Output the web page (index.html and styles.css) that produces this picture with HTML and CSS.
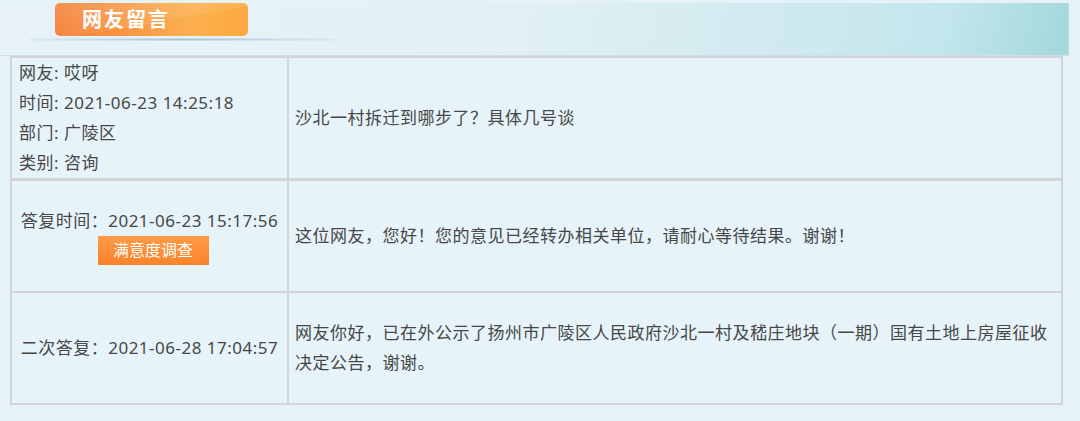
FILE: index.html
```html
<!DOCTYPE html>
<html lang="zh-CN">
<head>
    <meta charset="UTF-8">
    <meta name="viewport" content="width=device-width, initial-scale=1.0">
    <title>网友留言</title>
    <link rel="stylesheet" href="styles.css">
</head>
<body>
    <div class="head">
        <div class="tab">网友留言</div>
        <div class="tab-line"></div>
    </div>
    <table class="msg">
        <tr class="ask">
            <td class="info">
                网友: 哎呀<br>
                时间: 2021-06-23 14:25:18<br>
                部门: 广陵区<br>
                类别: 咨询
            </td>
            <td class="text">沙北一村拆迁到哪步了？具体几号谈</td>
        </tr>
        <tr class="reply first">
            <td class="info center">
                答复时间：2021-06-23 15:17:56
                <div><span class="survey">满意度调查</span></div>
            </td>
            <td class="text">这位网友，您好！您的意见已经转办相关单位，请耐心等待结果。谢谢！</td>
        </tr>
        <tr class="reply">
            <td class="info center">二次答复：2021-06-28 17:04:57</td>
            <td class="text">网友你好，已在外公示了扬州市广陵区人民政府沙北一村及嵇庄地块（一期）国有土地上房屋征收决定公告，谢谢。</td>
        </tr>
    </table>
</body>
</html>
```

FILE: styles.css
```css
body {
    margin: 0;
    background: #e5f2f7;
    font-family: "Noto Sans", "Noto Sans CJK SC", sans-serif;
    color: #474747;
    font-size: 17px;
    letter-spacing: 0.5px;
}
.head {
    height: 52px;
    margin: 3px 11px 0 0;
    background: linear-gradient(100deg, #e6f2f7 0%, #e3f1f6 45%, #d2ebf0 70%, #c2e6ec 88%, #a3d8dc 100%);
    border-right: 1px solid #c5d6d9;
    border-bottom: 1px solid #d0dfe2;
}
.tab {
    width: 193px;
    height: 33px;
    margin: 2px 0 0 55px;
    box-sizing: border-box;
    padding-left: 27px;
    border-radius: 5px;
    background: linear-gradient(170deg, rgba(255,255,255,0.18) 0%, rgba(255,255,255,0.08) 55%, rgba(255,255,255,0) 56%),
                linear-gradient(90deg, #f47a2e 0%, #f99541 35%, #fbb04f 70%, #fca93e 100%);
    color: #fff;
    font-weight: bold;
    font-size: 20px;
    line-height: 33px;
    letter-spacing: 2px;
}
.tab-line {
    width: 305px;
    height: 3px;
    margin: 2px 0 0 30px;
    background: radial-gradient(ellipse at center, rgba(110,150,190,0.55) 0%, rgba(150,180,205,0.25) 55%, rgba(229,242,247,0) 100%);
}
.msg {
    margin: 0 0 0 10px;
    width: 1053px;
    border-collapse: collapse;
    background: #e6f3f8;
    border: 2px solid #d2d4d5;
}
.msg td {
    border: 2px solid #d2d4d5;
    padding: 0 6px;
    line-height: 30px;
    vertical-align: middle;
}
.msg .info {
    width: 262px;
    padding-left: 7px;
}
.msg .center {
    text-align: center;
    padding: 0;
}
.msg .text {
    padding-right: 10px;
}
.msg .ask td {
    height: 120px;
}
.msg .reply td {
    height: 110px;
}
.msg .first td {
    border-top-width: 3px;
}
.survey {
    display: inline-block;
    width: 111px;
    height: 29px;
    margin-left: 7px;
    background: linear-gradient(180deg, #ff9a45 0%, #fb832c 100%);
    color: #fff;
    font-size: 16px;
    line-height: 29px;
    letter-spacing: 0;
    vertical-align: top;
}
```
